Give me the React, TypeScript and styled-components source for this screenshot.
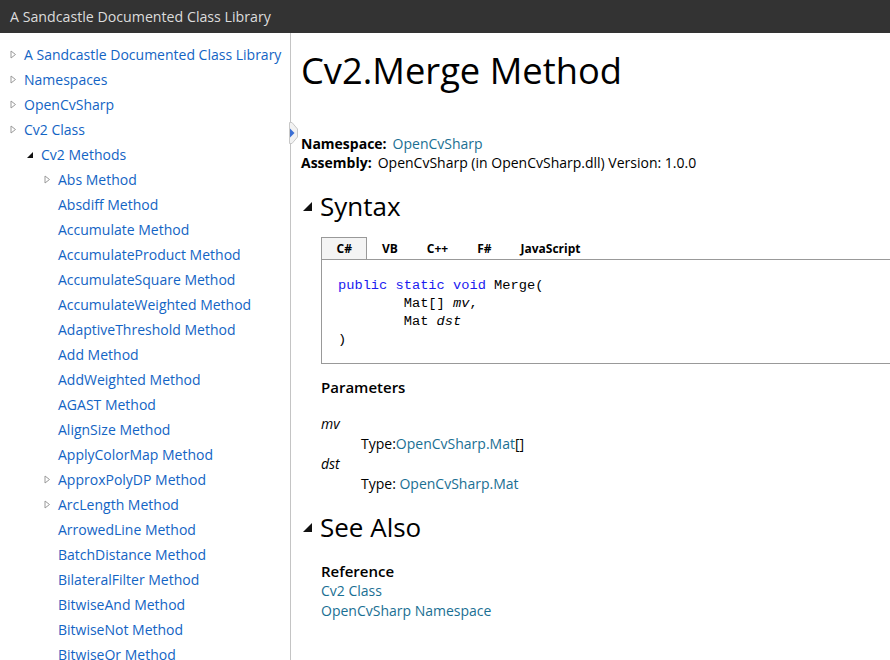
import React from 'react';
import styled, { createGlobalStyle } from 'styled-components';

const GlobalStyle = createGlobalStyle`
  html, body {
    margin: 0;
    padding: 0;
    height: 100%;
    overflow: hidden;
    background: #fff;
  }
  body {
    font-family: 'Open Sans', 'Noto Sans', sans-serif;
    color: #000;
  }
`;

const Page = styled.div`
  display: flex;
  flex-direction: column;
  height: 660px;
`;

const Header = styled.div`
  height: 33px;
  flex: none;
  display: flex;
  align-items: center;
  padding-left: 10px;
  background: #333;
  color: #dcdcdc;
  font-size: 14.2px;
`;

const Body = styled.div`
  flex: 1;
  display: flex;
  min-height: 0;
`;

const Sidebar = styled.nav`
  position: relative;
  width: 290px;
  flex: none;
  border-right: 1px solid #c4c4c4;
  padding-top: 9px;
`;

const TocScroll = styled.div`
  height: 100%;
  overflow: hidden;
`;

const TocItem = styled.div<{ $level: number }>`
  display: flex;
  align-items: center;
  height: 25px;
  padding-left: ${(p) => 10 + p.$level * 17}px;
  white-space: nowrap;
`;

const Toggle = styled.span`
  width: 14px;
  flex: none;
  display: flex;
  align-items: center;
`;

const TocLink = styled.a`
  color: #1364c4;
  font-size: 14px;
  text-decoration: none;
`;

const Splitter = styled.div`
  position: absolute;
  right: -9px;
  top: 89px;
  width: 10px;
  height: 22px;
  z-index: 2;
`;

const Content = styled.main`
  flex: 1;
  min-width: 0;
  padding: 14px 0 0 10px;
  overflow: hidden;
`;

const Title = styled.h1`
  margin: 0;
  font-size: 36.3px;
  font-weight: 400;
  line-height: 46px;
`;

const Info = styled.div`
  margin-top: 41px;
  font-size: 14px;
  line-height: 19px;
`;

const Label = styled.b`
  font-weight: 700;
  margin-right: 6px;
`;

const DocLink = styled.a`
  color: #1a6f93;
  text-decoration: none;
`;

const SectionHeading = styled.h2<{ $gap?: number }>`
  display: flex;
  align-items: center;
  gap: 8px;
  margin: ${(p) => p.$gap ?? 16}px 0 0 2px;
  font-size: 26px;
  font-weight: 400;
  line-height: 36px;
`;

const Section = styled.div`
  padding-left: 20px;
`;

const Tabs = styled.div`
  display: flex;
  margin-top: 13px;
  border-bottom: 1px solid #999;
  margin-right: -40px;
`;

const Tab = styled.div<{ $active?: boolean }>`
  height: 21px;
  padding: 0 ${(p) => (p.$active ? 14.5 : 13.5)}px;
  display: flex;
  align-items: center;
  font-size: 12px;
  font-weight: 700;
  background: ${(p) => (p.$active ? '#f4f4f4' : 'transparent')};
  border: 1px solid ${(p) => (p.$active ? '#999' : 'transparent')};
  border-bottom: none;
`;

const CodeBox = styled.pre`
  margin: 0 -40px 0 0;
  padding: 17px 16px 14px;
  border-left: 1px solid #999;
  border-bottom: 1px solid #999;
  font-family: 'Liberation Mono', 'DejaVu Sans Mono', monospace;
  font-size: 13.7px;
  line-height: 18px;
  color: #000;
`;

const Keyword = styled.span`
  color: #1b1bf0;
`;

const SubHeading = styled.div`
  margin-top: 13px;
  font-size: 15px;
  font-weight: 600;
  line-height: 20px;
`;

const ParamList = styled.dl`
  margin: 17px 0 0;
  font-size: 14px;
  line-height: 20px;
`;

const ParamName = styled.dt`
  font-style: italic;
`;

const ParamType = styled.dd`
  margin-left: 40px;
`;

const RefList = styled.div`
  margin-top: 16px;
  display: flex;
  flex-direction: column;
  font-size: 14px;
  line-height: 20px;
`;

const RefTitle = styled.span`
  font-size: 15px;
  font-weight: 600;
`;

const Collapsed = () => (
  <svg width="7" height="9" viewBox="0 0 7 9">
    <path d="M1 1 L5.5 4.5 L1 8 Z" fill="#fff" stroke="#9a9a9a" strokeWidth="1" />
  </svg>
);

const Expanded = ({ size = 6 }: { size?: number }) => (
  <svg width={size} height={size} viewBox="0 0 6 6">
    <path d="M6 0 L6 6 L0 6 Z" fill="#111" />
  </svg>
);

type Node = { text: string; level: number; toggle?: 'closed' | 'open' };

const toc: Node[] = [
  { text: 'A Sandcastle Documented Class Library', level: 0, toggle: 'closed' },
  { text: 'Namespaces', level: 0, toggle: 'closed' },
  { text: 'OpenCvSharp', level: 0, toggle: 'closed' },
  { text: 'Cv2 Class', level: 0, toggle: 'closed' },
  { text: 'Cv2 Methods', level: 1, toggle: 'open' },
  { text: 'Abs Method', level: 2, toggle: 'closed' },
  { text: 'Absdiff Method', level: 2 },
  { text: 'Accumulate Method', level: 2 },
  { text: 'AccumulateProduct Method', level: 2 },
  { text: 'AccumulateSquare Method', level: 2 },
  { text: 'AccumulateWeighted Method', level: 2 },
  { text: 'AdaptiveThreshold Method', level: 2 },
  { text: 'Add Method', level: 2 },
  { text: 'AddWeighted Method', level: 2 },
  { text: 'AGAST Method', level: 2 },
  { text: 'AlignSize Method', level: 2 },
  { text: 'ApplyColorMap Method', level: 2 },
  { text: 'ApproxPolyDP Method', level: 2, toggle: 'closed' },
  { text: 'ArcLength Method', level: 2, toggle: 'closed' },
  { text: 'ArrowedLine Method', level: 2 },
  { text: 'BatchDistance Method', level: 2 },
  { text: 'BilateralFilter Method', level: 2 },
  { text: 'BitwiseAnd Method', level: 2 },
  { text: 'BitwiseNot Method', level: 2 },
  { text: 'BitwiseOr Method', level: 2 },
];

const App = () => (
  <Page>
    <GlobalStyle />
    <Header>A Sandcastle Documented Class Library</Header>
    <Body>
      <Sidebar>
        <TocScroll>
          {toc.map((n) => (
            <TocItem key={n.text} $level={n.level}>
              <Toggle>
                {n.toggle === 'closed' && <Collapsed />}
                {n.toggle === 'open' && <Expanded />}
              </Toggle>
              <TocLink href="#">{n.text}</TocLink>
            </TocItem>
          ))}
        </TocScroll>
        <Splitter>
          <svg width="10" height="22" viewBox="0 0 10 22">
            <path d="M0.5 0.5 L3 0.5 L8.5 7 L8.5 15 L3 21.5 L0.5 21.5 Z" fill="#f2f2f2" stroke="#c8c8c8" strokeWidth="1" />
            <path d="M1 6.5 L5.5 11 L1 15.5 Z" fill="#3b6fd4" />
          </svg>
        </Splitter>
      </Sidebar>
      <Content>
        <Title>Cv2.Merge Method</Title>
        <Info>
          <div>
            <Label>Namespace:</Label>
            <DocLink href="#">OpenCvSharp</DocLink>
          </div>
          <div>
            <Label>Assembly:</Label>
            OpenCvSharp (in OpenCvSharp.dll) Version: 1.0.0
          </div>
        </Info>
        <SectionHeading>
          <Expanded size={9} />
          Syntax
        </SectionHeading>
        <Section>
          <Tabs>
            <Tab $active>C#</Tab>
            <Tab>VB</Tab>
            <Tab>C++</Tab>
            <Tab>F#</Tab>
            <Tab>JavaScript</Tab>
          </Tabs>
          <CodeBox>
            <Keyword>public</Keyword> <Keyword>static</Keyword> <Keyword>void</Keyword> Merge(
            {'\n        '}Mat[] <i>mv</i>,{'\n        '}Mat <i>dst</i>
            {'\n)'}
          </CodeBox>
          <SubHeading>Parameters</SubHeading>
          <ParamList>
            <ParamName>mv</ParamName>
            <ParamType>
              Type:<DocLink href="#">OpenCvSharp.Mat</DocLink>[]
            </ParamType>
            <ParamName>dst</ParamName>
            <ParamType>
              Type: <DocLink href="#">OpenCvSharp.Mat</DocLink>
            </ParamType>
          </ParamList>
        </Section>
        <SectionHeading $gap={15}>
          <Expanded size={9} />
          See Also
        </SectionHeading>
        <Section>
          <RefList>
            <RefTitle>Reference</RefTitle>
            <DocLink href="#">Cv2 Class</DocLink>
            <DocLink href="#">OpenCvSharp Namespace</DocLink>
          </RefList>
        </Section>
      </Content>
    </Body>
  </Page>
);

export default App;
